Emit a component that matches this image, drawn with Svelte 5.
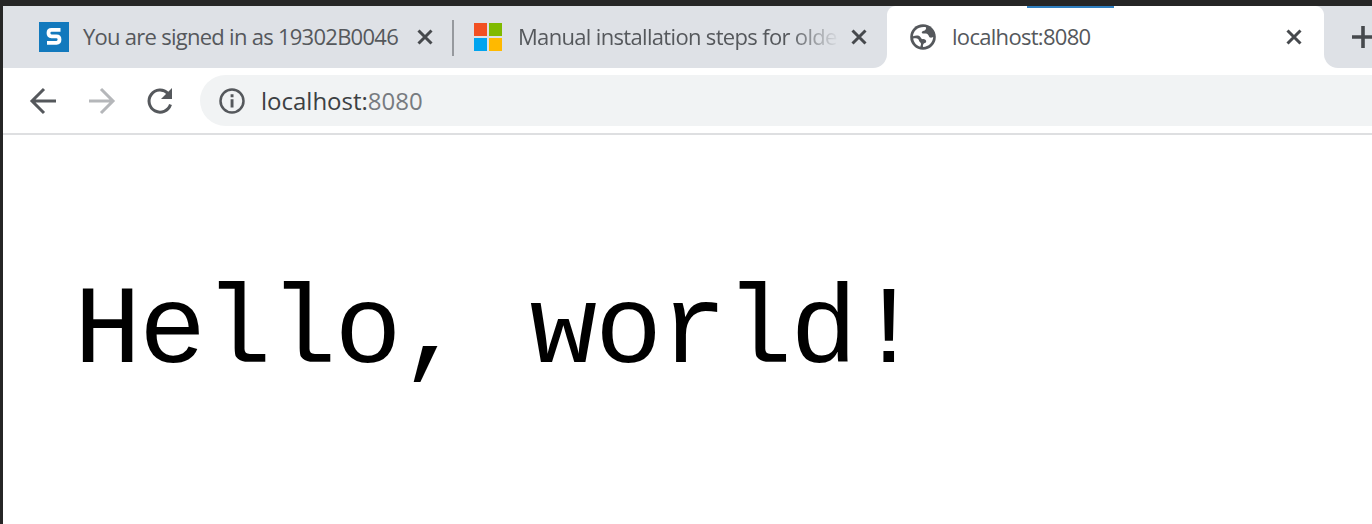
<script>
  const tabs = [
    { title: 'You are signed in as 19302B0046', icon: 's', cls: 'first' },
    { title: 'Manual installation steps for olde', icon: 'ms', cls: 'second' },
    { title: 'localhost:8080', icon: 'globe', cls: 'active' }
  ];
</script>

<div class="window">
  <div class="tabs">
    {#each tabs as tab}
      <div class="tab {tab.cls}">
        {#if tab.icon === 's'}
          <svg class="fav" width="30" height="30" viewBox="0 0 30 30">
            <rect width="30" height="30" fill="#1279bd" />
            <path d="M21.500 7.800H12.500Q9.500 7.800 9.500 11T12.500 14.300H17.500Q20.500 14.300 20.500 17.500T17.500 20.800H8" fill="none" stroke="#fff" stroke-width="3.800" />
          </svg>
        {:else if tab.icon === 'ms'}
          <svg class="fav" width="28" height="28" viewBox="0 0 28 28">
            <path fill="#f25022" d="M0 0h13v13H0z" />
            <path fill="#7fba00" d="M15 0h13v13H15z" />
            <path fill="#00a4ef" d="M0 15h13v13H0z" />
            <path fill="#ffb900" d="M15 15h13v13H15z" />
          </svg>
        {:else}
          <svg class="fav" width="26" height="26" viewBox="0 0 26 26">
            <circle cx="13" cy="13" r="12.8" fill="#55585c" />
            <path fill="#fff" d="M16 3.200c.3 1.300-.1 2.500-1.300 3.200-1 .6-2.500.5-2.900 1.500-.3.800.5 1.600 1.500 1.700 1.800.2 3.500-.2 4.600.8 1.200 1.100 1.100 2.900 2.300 3.200.9.300 1.800-.1 3-.6-.2 5.300-4.700 10-10.200 9.900-.4-1.800.4-3.200 1.800-3.800 1.200-.5 1.700-1.500 1.200-2.700-.5-1.300-2.500-1-3.800-1.400-1.500-.5-1.500-2.600-2.900-3.100C7 11.200 5 11.600 3 12.200 3.300 6.600 8.700 2 16 3.200zM3.200 14.600c1.800-.6 4-.4 5.100.7.900.9.600 2 1.500 2.700.8.600 1.400 1.400 1.200 2.600-.1.800-.5 1.300-.7 2.100-3.800-1-6.600-4.200-7.100-8.100z" />
          </svg>
        {/if}
        <span class="title">{tab.title}</span>
        <svg class="close" width="16" height="16" viewBox="0 0 16 16"><path d="M1.500 1.500l13 13M14.500 1.500l-13 13" /></svg>
        {#if tab.cls === 'active'}<i class="accent"></i>{/if}
      </div>
    {/each}
    <div class="new">
      <svg width="24" height="24" viewBox="0 0 24 24"><path d="M12 1v22M1 12h22" stroke="#46494d" stroke-width="3.600" /></svg>
    </div>
  </div>

  <div class="toolbar">
    <svg class="nav" width="28" height="28" viewBox="0 0 28 28" stroke="#55585c"><path d="M27 14H3M15 2L3 14l12 12" /></svg>
    <svg class="nav" width="28" height="28" viewBox="0 0 28 28" stroke="#b5b7ba"><path d="M1 14h24M13 2l12 12-12 12" /></svg>
    <svg class="nav" width="28" height="28" viewBox="0 0 28 28" stroke="#55585c">
      <path d="M24.500 17.500A11 11 0 1 1 22 6.500" />
      <path d="M26 1v11h-11z" fill="#55585c" stroke="none" />
    </svg>
    <div class="address">
      <svg width="26" height="26" viewBox="0 0 26 26">
        <circle cx="13" cy="13" r="11.500" fill="none" stroke="#55585c" stroke-width="2.500" />
        <path d="M11.600 6.300h2.900v2.900h-2.900zM11.600 11.300h2.900v8.200h-2.900z" fill="#55585c" />
      </svg>
      <span class="url">localhost:<span class="port">8080</span></span>
    </div>
  </div>

  <main><pre>Hello, world!</pre></main>
</div>

<style>
  :global(body) { margin: 0; background: #fff; }
  .window {
    box-sizing: border-box; width: 1372px; height: 524px; overflow: hidden;
    border-top: 6px solid #262626; border-left: 3px solid #262626;
    background: #fff; font-family: "Open Sans", "Noto Sans", sans-serif;
  }
  .tabs { display: flex; height: 62px; background: #fff; }
  .tab { position: relative; box-sizing: border-box; display: flex; align-items: center; height: 62px; background: #dee1e6; flex: none; }
  .first { width: 450px; padding-left: 36px; }
  .second { width: 434px; padding-left: 21px; border-radius: 0 0 14px 0; }
  .active {
    width: 437px; padding-left: 23px;
    background:
      radial-gradient(circle at 100% 100%, #fff 8.500px, #dee1e6 9.500px) 0 0 / 9px 9px no-repeat,
      radial-gradient(circle at 0 100%, #fff 8.500px, #dee1e6 9.500px) 100% 0 / 9px 9px no-repeat,
      #fff;
  }
  .first::after {
    content: ""; position: absolute; right: -1px; top: 14px; width: 2px; height: 36px; background: #96999e; z-index: 1;
  }
  .fav { flex: none; }
  .title {
    flex: none; white-space: nowrap; color: #55585c;
    font-size: 22px; line-height: 30px; padding-bottom: 2px;
  }
  .first .title { margin-left: 14px; letter-spacing: -0.730px; }
  .second .title {
    margin-left: 16px; letter-spacing: -0.670px;
    mask-image: linear-gradient(to right, #000 270px, transparent 322px);
  }
  .active .title { margin-left: 16px; letter-spacing: -0.700px; }
  .close { position: absolute; top: 23px; fill: none; stroke: #46494d; stroke-width: 3; }
  .first .close { left: 414px; }
  .second .close { left: 398px; }
  .active .close { left: 399px; }
  .accent { position: absolute; left: 140px; top: 0; width: 87px; height: 2px; background: #2f7fc0; }
  .new { flex: 1; overflow: hidden; box-sizing: border-box; padding: 19px 0 0 27px; background: #dee1e6; border-radius: 0 0 0 14px; }
  .new svg { display: block; }
  .toolbar {
    box-sizing: border-box; height: 67px; display: flex; align-items: center; gap: 30.500px;
    padding-left: 26px; border-bottom: 2px solid #dedfe1;
  }
  .nav { flex: none; fill: none; stroke-width: 3; }
  .address {
    flex: 1; box-sizing: border-box; height: 51px; margin-left: -4.500px; padding-left: 19px; display: flex; align-items: center;
    background: #f1f3f4; border-radius: 26px 0 0 26px;
  }
  .url { margin-left: 16px; font-size: 24px; line-height: 34px; color: #3c4043; }
  .port { color: #777b80; }
  main { padding: 133px 0 0 71px; }
  pre {
    margin: 0; font: 112px/130px "Liberation Mono", monospace; letter-spacing: -2.100px; color: #000;
  }
</style>
